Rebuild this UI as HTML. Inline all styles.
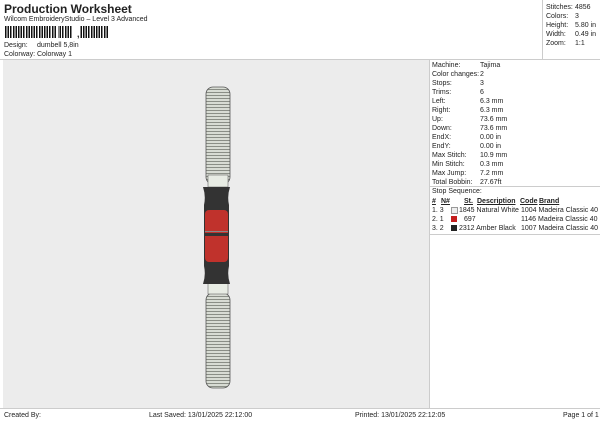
<!DOCTYPE html>
<html><head><style>
body{margin:0;width:600px;height:424px;background:#fff;font-family:"Liberation Sans",sans-serif;color:#222;position:relative;overflow:hidden}
.a{position:absolute;white-space:nowrap;font-size:7px;line-height:9px}
</style></head><body>
<div class="a" style="left:4px;top:2px;font-size:12px;line-height:14px;font-weight:bold">Production Worksheet</div>
<div class="a" style="left:4px;top:15px">Wilcom EmbroideryStudio – Level 3 Advanced</div>
<div style="position:absolute;left:5px;top:26px;width:103px;height:12px;background:repeating-linear-gradient(90deg,#111 0 1.5px,#fff 1.5px 2.6px)"></div>
<div style="position:absolute;left:56px;top:26px;width:2px;height:12px;background:#fff"></div>
<div style="position:absolute;left:72px;top:26px;width:8px;height:12px;background:#fff"></div>
<div class="a" style="left:77px;top:30px;font-weight:bold;font-size:9px">,</div>
<div class="a" style="left:4px;top:41px">Design:</div><div class="a" style="left:37px;top:41px">dumbell 5,8in</div>
<div class="a" style="left:4px;top:50px">Colorway:</div><div class="a" style="left:37px;top:50px">Colorway 1</div>
<div style="position:absolute;left:542px;top:0;width:1px;height:60px;background:#ccc"></div>
<div style="position:absolute;left:0;top:59px;width:600px;height:1px;background:#ccc"></div>
<div class="a" style="left:546px;top:3px">Stitches:</div><div class="a" style="left:575px;top:3px">4856</div>
<div class="a" style="left:546px;top:12px">Colors:</div><div class="a" style="left:575px;top:12px">3</div>
<div class="a" style="left:546px;top:21px">Height:</div><div class="a" style="left:575px;top:21px">5.80 in</div>
<div class="a" style="left:546px;top:30px">Width:</div><div class="a" style="left:575px;top:30px">0.49 in</div>
<div class="a" style="left:546px;top:39px">Zoom:</div><div class="a" style="left:575px;top:39px">1:1</div>
<div style="position:absolute;left:3px;top:60px;width:426px;height:348px;background:#ececec"></div>
<div style="position:absolute;left:429px;top:60px;width:1px;height:348px;background:#ccc"></div>
<svg style="position:absolute;left:0;top:0" width="600" height="424">
<defs><pattern id="t" width="4" height="3" patternUnits="userSpaceOnUse"><rect width="4" height="3" fill="#d8dcd4"/><rect y="2" width="4" height="1" fill="#8a8e86"/></pattern></defs>
<rect x="206" y="87" width="24" height="97" rx="7" fill="url(#t)" stroke="#555" stroke-width="0.8"/>
<rect x="208" y="175" width="20" height="12" fill="#e8ece4" stroke="#666" stroke-width="0.6"/>
<rect x="206" y="293" width="24" height="95" rx="7" fill="url(#t)" stroke="#555" stroke-width="0.8"/>
<rect x="208" y="282" width="20" height="12" fill="#e8ece4" stroke="#666" stroke-width="0.6"/>
<path d="M203 187 H230 Q227 196 229 205 V266 Q227 275 230 284 H203 Q206 275 204 266 V205 Q206 196 203 187Z" fill="#333"/>
<rect x="205" y="210" width="23" height="52" rx="4" fill="#c0322c"/>
<rect x="205" y="233" width="23" height="3" fill="#333"/>
<rect x="205" y="231" width="23" height="1" fill="#888"/>
</svg>
<div class="a" style="left:432px;top:61px;line-height:9px">Machine:<br>Color changes:<br>Stops:<br>Trims:<br>Left:<br>Right:<br>Up:<br>Down:<br>EndX:<br>EndY:<br>Max Stitch:<br>Min Stitch:<br>Max Jump:<br>Total Bobbin:<br>Stop Sequence:</div>
<div class="a" style="left:480px;top:61px;line-height:9px">Tajima<br>2<br>3<br>6<br>6.3 mm<br>6.3 mm<br>73.6 mm<br>73.6 mm<br>0.00 in<br>0.00 in<br>10.9 mm<br>0.3 mm<br>7.2 mm<br>27.67ft</div>
<div style="position:absolute;left:430px;top:186px;width:170px;height:1px;background:#ccc"></div>
<div class="a" style="left:432px;top:197px;font-weight:bold;text-decoration:underline">#</div>
<div class="a" style="left:441px;top:197px;font-weight:bold;text-decoration:underline">N#</div>
<div class="a" style="left:464px;top:197px;font-weight:bold;text-decoration:underline">St.</div>
<div class="a" style="left:477px;top:197px;font-weight:bold;text-decoration:underline">Description</div>
<div class="a" style="left:520px;top:197px;font-weight:bold;text-decoration:underline">Code</div>
<div class="a" style="left:539px;top:197px;font-weight:bold;text-decoration:underline">Brand</div>
<div class="a" style="left:432px;top:206px">1. 3</div><div style="position:absolute;left:451px;top:207px;width:5px;height:5px;background:#eee;border:1px solid #999"></div><div class="a" style="left:459px;top:206px">1845 Natural White</div><div class="a" style="left:521px;top:206px">1004 Madeira Classic 40</div>
<div class="a" style="left:432px;top:215px">2. 1</div><div style="position:absolute;left:451px;top:216px;width:6px;height:6px;background:#c41e1e"></div><div class="a" style="left:464px;top:215px">697</div><div class="a" style="left:521px;top:215px">1146 Madeira Classic 40</div>
<div class="a" style="left:432px;top:224px">3. 2</div><div style="position:absolute;left:451px;top:225px;width:6px;height:6px;background:#222"></div><div class="a" style="left:459px;top:224px">2312 Amber Black</div><div class="a" style="left:521px;top:224px">1007 Madeira Classic 40</div>
<div style="position:absolute;left:430px;top:234px;width:170px;height:1px;background:#ccc"></div>
<div style="position:absolute;left:0;top:408px;width:600px;height:1px;background:#ccc"></div>
<div class="a" style="left:4px;top:411px">Created By:</div>
<div class="a" style="left:149px;top:411px">Last Saved: 13/01/2025 22:12:00</div>
<div class="a" style="left:355px;top:411px">Printed: 13/01/2025 22:12:05</div>
<div class="a" style="left:563px;top:411px">Page 1 of 1</div>
</body></html>
